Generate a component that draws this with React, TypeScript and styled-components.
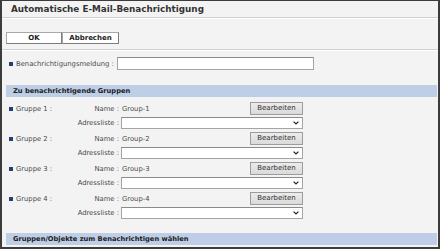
import React from 'react';
import styled, { createGlobalStyle } from 'styled-components';

const GlobalStyle = createGlobalStyle`
  html, body {
    margin: 0;
    padding: 0;
    background: #ffffff;
  }
  body {
    font-family: 'DejaVu Sans', Verdana, sans-serif;
  }
`;

const Frame = styled.div`
  box-sizing: border-box;
  width: 440px;
  height: 249px;
  background: #f3f3f3;
  border-top: 1px solid #3c3c3c;
  border-left: 2px solid #3c3c3c;
  border-right: 2px solid #3c3c3c;
  border-bottom: 2px solid #3c3c3c;
  overflow: hidden;
  display: flex;
  flex-direction: column;
  color: #4a4a4a;
  font-size: 6.8px;
`;

const Title = styled.div`
  height: 16px;
  padding-left: 9px;
  display: flex;
  align-items: center;
  font-size: 8.8px;
  font-weight: bold;
  color: #333;
  border-bottom: 1px solid #cfcfcf;
  box-shadow: 0 1px 0 #ffffff;
`;

const Toolbar = styled.div`
  display: flex;
  padding: 14px 0 0 4px;
  height: 12px;
`;

const Divider = styled.div`
  margin-top: 5px;
  border-top: 1px solid #cfcfcf;
  box-shadow: 0 1px 0 #ffffff;
`;

const ActionButton = styled.button<{ $width: number }>`
  box-sizing: border-box;
  width: ${(p) => p.$width}px;
  height: 12px;
  padding: 0;
  background: #ffffff;
  border: 1px solid #a8a8a8;
  border-right-color: #7c7c7c;
  border-bottom-color: #7c7c7c;
  font-family: inherit;
  font-size: 7px;
  font-weight: bold;
  color: #222;
  line-height: 10px;
`;

const FieldRow = styled.div`
  display: flex;
  align-items: center;
  margin-top: 7px;
  padding-left: 7px;
  height: 13px;
`;

const Bullet = styled.span`
  display: inline-block;
  width: 4px;
  height: 4px;
  background: #223f70;
  margin-right: 3px;
  flex-shrink: 0;
`;

const Label = styled.span`
  white-space: nowrap;
`;

const TextInput = styled.div<{ $width: number }>`
  box-sizing: border-box;
  width: ${(p) => p.$width}px;
  height: 13px;
  margin-left: 3px;
  background: #ffffff;
  border: 1px solid #a4a4a4;
  border-top-color: #8a8a8a;
`;

const SectionHeader = styled.div<{ $top: number }>`
  margin: ${(p) => p.$top}px 1px 0 4px;
  height: 12px;
  padding-left: 7px;
  display: flex;
  align-items: center;
  background: #bdcee6;
  font-size: 6.7px;
  font-weight: bold;
  color: #1c1c1c;
`;

const GroupList = styled.div`
  display: flex;
  flex-direction: column;
  gap: 3px;
  margin-top: 5px;
  padding-left: 7px;
`;

const GroupGrid = styled.div`
  display: grid;
  grid-template-columns: 62px 46px 182px;
  grid-template-rows: 13px 12px;
  column-gap: 2px;
  row-gap: 2px;
  align-items: center;
`;

const GroupName = styled.div`
  display: flex;
  align-items: center;
`;

const RightLabel = styled.div`
  text-align: right;
  white-space: nowrap;
`;

const ValueCell = styled.div`
  display: flex;
  align-items: center;
  justify-content: space-between;
  padding-left: 1px;
`;

const EditButton = styled.button`
  box-sizing: border-box;
  width: 53px;
  height: 13px;
  padding: 0;
  background: linear-gradient(#ececec, #dadada);
  border: 1px solid #9c9c9c;
  font-family: inherit;
  font-size: 7px;
  color: #333;
  line-height: 11px;
`;

const SelectBox = styled.div`
  box-sizing: border-box;
  height: 12px;
  background: #ffffff;
  border: 1px solid #a4a4a4;
  border-top-color: #8a8a8a;
  display: flex;
  align-items: center;
  justify-content: flex-end;
  padding-right: 3px;
`;

const Spacer = styled.div`
  flex: 1;
`;

const BottomGap = styled.div`
  height: 2px;
`;

const Chevron = () => (
  <svg width="6" height="4" viewBox="0 0 6 4">
    <path d="M0.6 0.6 L3 3 L5.4 0.6" fill="none" stroke="#222" strokeWidth="1.2" />
  </svg>
);

const groups = [1, 2, 3, 4];

const App: React.FC = () => {
  return (
    <>
      <GlobalStyle />
      <Frame>
        <Title>Automatische E-Mail-Benachrichtigung</Title>
        <Toolbar>
          <ActionButton $width={56}>OK</ActionButton>
          <ActionButton $width={57}>Abbrechen</ActionButton>
        </Toolbar>
        <Divider />
        <FieldRow>
          <Bullet />
          <Label>Benachrichtigungsmeldung :</Label>
          <TextInput $width={197} />
        </FieldRow>
        <SectionHeader $top={15}>Zu benachrichtigende Gruppen</SectionHeader>
        <GroupList>
          {groups.map((n) => (
            <GroupGrid key={n}>
              <GroupName>
                <Bullet />
                <Label>Gruppe {n} :</Label>
              </GroupName>
              <RightLabel>Name :</RightLabel>
              <ValueCell>
                <Label>Group-{n}</Label>
                <EditButton>Bearbeiten</EditButton>
              </ValueCell>
              <div />
              <RightLabel>Adressliste :</RightLabel>
              <SelectBox>
                <Chevron />
              </SelectBox>
            </GroupGrid>
          ))}
        </GroupList>
        <Spacer />
        <SectionHeader $top={0}>Gruppen/Objekte zum Benachrichtigen wählen</SectionHeader>
        <BottomGap />
      </Frame>
    </>
  );
};

export default App;
